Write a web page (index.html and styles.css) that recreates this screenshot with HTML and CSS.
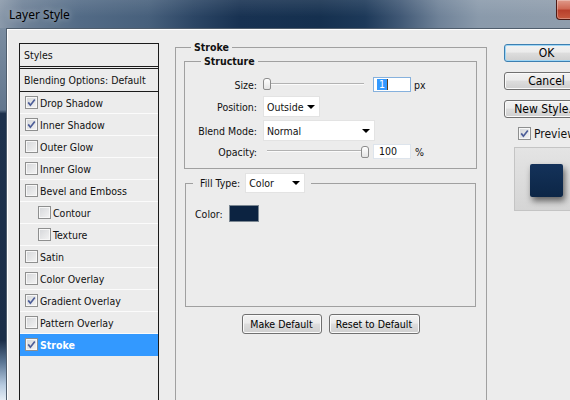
FILE: index.html
```html
<!DOCTYPE html>
<html>
<head>
<meta charset="utf-8">
<title>Layer Style</title>
<link rel="stylesheet" href="styles.css">
</head>
<body>
<div class="window">
  <div class="titlebar">
    <span class="title">Layer Style</span>
    <span class="close"></span>
  </div>
  <div class="frame-row">
    <div class="frame-left"></div>
    <div class="client">
      <div class="styles-panel">
        <div class="hdr">Styles</div>
        <div class="hdr blend">Blending Options: Default</div>
        <div class="item"><span class="cb"><svg viewBox="0 0 11 11" width="11" height="11"><path d="M2.2 5.4 L4.4 8.2 L8.8 2.4" /></svg></span>Drop Shadow</div>
        <div class="item"><span class="cb"><svg viewBox="0 0 11 11" width="11" height="11"><path d="M2.2 5.4 L4.4 8.2 L8.8 2.4" /></svg></span>Inner Shadow</div>
        <div class="item"><span class="cb"></span>Outer Glow</div>
        <div class="item"><span class="cb"></span>Inner Glow</div>
        <div class="item"><span class="cb"></span>Bevel and Emboss</div>
        <div class="item sub"><span class="cb"></span>Contour</div>
        <div class="item sub"><span class="cb"></span>Texture</div>
        <div class="item"><span class="cb"></span>Satin</div>
        <div class="item"><span class="cb"></span>Color Overlay</div>
        <div class="item"><span class="cb"><svg viewBox="0 0 11 11" width="11" height="11"><path d="M2.2 5.4 L4.4 8.2 L8.8 2.4" /></svg></span>Gradient Overlay</div>
        <div class="item"><span class="cb"></span>Pattern Overlay</div>
        <div class="item sel"><span class="cb"><svg viewBox="0 0 11 11" width="11" height="11"><path d="M2.2 5.4 L4.4 8.2 L8.8 2.4" /></svg></span>Stroke</div>
      </div>

      <fieldset class="group stroke-group">
        <legend>Stroke</legend>
        <fieldset class="group structure">
          <legend>Structure</legend>
          <div class="row r1">
            <span class="lbl">Size:</span>
            <div class="slider"><span class="track"></span><span class="thumb"></span></div>
            <span class="input focus"><span class="seltext">1</span><span class="caret"></span></span>
            <span class="unit">px</span>
          </div>
          <div class="row r2">
            <span class="lbl">Position:</span>
            <span class="select w-pos">Outside<span class="arrow"></span></span>
          </div>
          <div class="row r3">
            <span class="lbl">Blend Mode:</span>
            <span class="select w-blend">Normal<span class="arrow"></span></span>
          </div>
          <div class="row r4">
            <span class="lbl">Opacity:</span>
            <div class="slider"><span class="track"></span><span class="thumb right"></span></div>
            <span class="input">100</span>
            <span class="unit pct">%</span>
          </div>
        </fieldset>
        <fieldset class="group fill">
          <legend><span>Fill Type:</span><span class="select w-fill">Color<span class="arrow"></span></span></legend>
          <div class="fill-body">
            <div class="color-row"><span>Color:</span><span class="swatch"></span></div>
          </div>
        </fieldset>
        <div class="btn-row">
          <span class="btn w-make">Make Default</span>
          <span class="btn w-reset">Reset to Default</span>
        </div>
      </fieldset>

      <div class="side">
        <span class="btn sbtn default">OK</span>
        <span class="btn sbtn">Cancel</span>
        <span class="btn sbtn">New Style...</span>
        <div class="preview-row"><span class="cb"><svg viewBox="0 0 11 11" width="11" height="11"><path d="M2.2 5.4 L4.4 8.2 L8.8 2.4" /></svg></span>Preview</div>
        <div class="preview-box"><span class="square"></span></div>
      </div>
    </div>
  </div>
</div>
</body>
</html>
```

FILE: styles.css
```css
* { box-sizing: border-box; }
html, body { margin: 0; padding: 0; }
body {
  width: 570px;
  height: 400px;
  overflow: hidden;
  font-family: "DejaVu Sans Condensed", "DejaVu Sans", sans-serif;
  font-size: 10.5px;
  color: #111;
}
.window {
  width: 570px;
  height: 400px;
  overflow: hidden;
  display: flex;
  flex-direction: column;
}
.titlebar {
  height: 28px;
  flex: none;
  display: flex;
  align-items: flex-start;
  background:
    linear-gradient(180deg, rgba(255,255,255,0.10), rgba(255,255,255,0) 60%),
    linear-gradient(90deg, #8a99aa 0%, #6e8197 4%, #536b86 14%, #47607c 26%, #2c4665 34%, #183252 42%, #15304f 56%, #1d3959 64%, #3f5774 70%, #6f8298 77%, #8a9aab 84%, #8f9dac 100%);
}
.title {
  font-family: "Noto Sans", "Open Sans", sans-serif;
  font-size: 12px;
  line-height: 16px;
  margin: 7px 0 0 9px;
  color: #000;
  text-shadow: 0 0 6px rgba(255,255,255,0.55);
}
.close {
  margin-left: auto;
  margin-right: -30px;
  width: 44px;
  height: 20px;
  border: 1px solid #4d1a14;
  border-top: none;
  border-radius: 0 0 0 4px;
  background: linear-gradient(180deg, #e09a8a 0%, #cf6a55 45%, #b8402c 55%, #c75a3f 100%);
  box-shadow: inset 0 0 0 1px rgba(255,255,255,0.3);
}
.frame-row {
  flex: 1;
  display: flex;
  min-height: 0;
}
.frame-left {
  width: 6px;
  flex: none;
  background: linear-gradient(180deg, #7b8da1 0%, #63778e 22%, #1d314c 23%, #1b2e48 84%, #5d7896 90%, #b7cbe0 96%, #e3ecf4 100%);
}
.client {
  flex: 1;
  min-width: 0;
  display: flex;
  align-items: flex-start;
  background: #ececec;
  border-top: 1px solid #4f5d6c;
  border-left: 1px solid #4f5d6c;
  box-shadow: inset 1px 1px 0 #ffffff;
  padding: 0 0 0 12px;
  overflow: hidden;
}

/* Styles list */
.styles-panel {
  flex: none;
  width: 140px;
  height: 380px;
  margin-top: 14px;
  border: 1px solid #1b1b1b;
  border-bottom: none;
}
.hdr {
  height: 23px;
  line-height: 22px;
  padding-left: 4px;
  border-bottom: 1px solid #1b1b1b;
}
.hdr.blend {
  margin-top: 1px;
  height: 24px;
  border-top: 1px solid #1b1b1b;
}
.item {
  height: 22px;
  display: flex;
  align-items: center;
  gap: 2px;
  padding-left: 5px;
  border-bottom: 1px solid #fbfbfb;
  white-space: nowrap;
}
.item.sub { padding-left: 18px; }
.item.sel {
  background: #3399ff;
  color: #fff;
  font-weight: bold;
  border-bottom-color: #3399ff;
}
.cb {
  flex: none;
  width: 13px;
  height: 13px;
  border: 1px solid #8e8f8f;
  background: linear-gradient(135deg, #d4d6d9 0%, #f4f4f4 100%);
  box-shadow: inset 0 0 0 1px #f7f7f7;
  display: flex;
  align-items: center;
  justify-content: center;
}
.cb svg { display: block; }
.cb path {
  fill: none;
  stroke: #4c5d98;
  stroke-width: 1.7;
}

/* Groups */
fieldset {
  margin: 0;
  padding: 0;
  min-width: 0;
  border: 1px solid #a0a0a0;
}
legend {
  padding: 0 3px;
  line-height: 13px;
  font-weight: bold;
}
.stroke-group {
  flex: none;
  width: 312px;
  height: 380px;
  margin: 12px 0 0 16px;
  padding: 1px 9px 0 8px;
}
.stroke-group > legend { margin-left: 7px; }
.structure {
  width: 293px;
  padding: 0 0 9px 0;
}
.structure > legend { margin-left: 16px; }
.row {
  display: flex;
  align-items: center;
  white-space: nowrap;
}
.r1 { height: 15px; margin-top: 9px; }
.r2 { height: 21px; margin-top: 4px; }
.r3 { height: 21px; margin-top: 3px; }
.r4 { height: 15px; margin-top: 3px; }
.lbl {
  width: 72px;
  text-align: right;
  margin-right: 6px;
  flex: none;
}
.slider {
  position: relative;
  width: 106px;
  height: 15px;
  flex: none;
}
.track {
  position: absolute;
  left: 4px;
  right: 5px;
  top: 6px;
  height: 2px;
  border-top: 1px solid #b2b2b2;
  border-bottom: 1px solid #fbfbfb;
}
.thumb {
  position: absolute;
  left: 0;
  top: 1px;
  width: 8px;
  height: 12px;
  border: 1px solid #8c8c8c;
  border-radius: 3px 3px 2px 2px;
  background: linear-gradient(180deg, #ffffff, #e4e4e4);
}
.thumb.right { left: auto; right: 0; top: 2px; }
.input {
  flex: none;
  width: 38px;
  height: 15px;
  margin-left: 4px;
  background: #fff;
  border: 1px solid #dde4ec;
  padding-left: 5px;
  line-height: 13px;
  display: flex;
  align-items: center;
}
.input.focus {
  border-color: #86b1dd;
  padding-left: 3px;
}
.seltext {
  background: #3399ff;
  color: #fff;
  padding: 0 2px;
  line-height: 11px;
}
.caret {
  width: 1px;
  height: 11px;
  background: #5a3d1a;
}
.unit { margin-left: 3px; }
.unit.pct { margin-left: 4px; }
.select {
  flex: none;
  display: flex;
  align-items: center;
  height: 21px;
  background: #fff;
  border: 1px solid #e3e3e3;
  padding-left: 3px;
  font-weight: normal;
}
.arrow {
  margin-left: auto;
  margin-right: 4px;
  width: 0;
  height: 0;
  border-left: 4px solid transparent;
  border-right: 4px solid transparent;
  border-top: 4px solid #000;
}
.w-pos { width: 57px; }
.w-blend { width: 112px; }
.w-fill { width: 60px; height: 20px; margin-left: 5px; }

.fill {
  width: 291px;
  margin: 4px 0 0 1px;
}
.fill > legend {
  margin-left: 7px;
  padding: 0 6px 0 7px;
  display: flex;
  align-items: center;
  font-weight: normal;
  line-height: 13px;
}
.fill-body {
  height: 113px;
  padding: 12px 0 0 9px;
}
.color-row {
  display: flex;
  align-items: center;
  height: 17px;
}
.swatch {
  width: 30px;
  height: 17px;
  margin-left: 6px;
  background: #0c2341;
  border: 1px solid #7b8792;
}
.btn-row {
  display: flex;
  justify-content: center;
  gap: 7px;
  margin-top: 7px;
}
.btn {
  flex: none;
  display: flex;
  align-items: center;
  justify-content: center;
  height: 20px;
  border: 1px solid #707070;
  border-radius: 3px;
  background: linear-gradient(180deg, #f2f2f2 0%, #ebebeb 45%, #dddddd 50%, #cfcfcf 100%);
  box-shadow: inset 0 0 0 1px #fafafa;
  color: #000;
  white-space: nowrap;
}
.w-make { width: 80px; }
.w-reset { width: 91px; }

/* Right column */
.side {
  flex: none;
  margin-left: 17px;
  padding-top: 15px;
  display: flex;
  flex-direction: column;
  align-items: flex-start;
  width: 90px;
}
.sbtn {
  width: 87px;
  height: 18px;
  font-size: 12px;
  margin-bottom: 10px;
  padding-right: 2px;
}
.sbtn.default {
  border-color: #3c7fb1;
  box-shadow: inset 0 0 0 1px #9fd6f5;
}
.preview-row {
  display: flex;
  align-items: center;
  gap: 3px;
  margin: -1px 0 0 14px;
  height: 13px;
  font-size: 12px;
  white-space: nowrap;
}
.preview-box {
  margin: 7px 0 0 10px;
  width: 70px;
  height: 64px;
  border: 1px solid #c4c4c4;
  border-right: none;
  background: linear-gradient(180deg, #e4e4e4, #d5d5d5);
  padding: 16px 0 0 15px;
}
.square {
  display: block;
  width: 33px;
  height: 33px;
  border-radius: 2px;
  background: linear-gradient(180deg, #14325a, #0c2646);
  box-shadow: 2px 4px 6px rgba(0,0,0,0.55);
}
```
